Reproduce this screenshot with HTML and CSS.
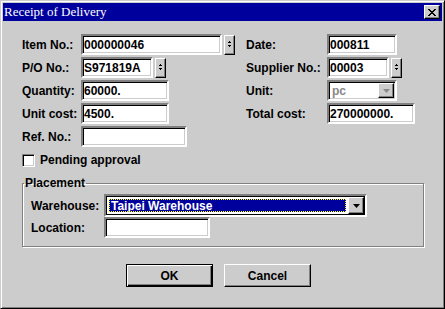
FILE: index.html
```html
<!doctype html>
<html lang="en">

<head>
  <meta charset="UTF-8" />
  <title>Receipt of Delivery</title>
  <link rel="stylesheet" href="styles.css">
</head>

<body>
  <div class="window">
    <div class="titlebar">
      <span class="title">Receipt of Delivery</span>
      <span class="close-btn">
        <svg width="8" height="7" viewBox="0 0 8 7">
          <path d="M0 0h2v1h-2zM6 0h2v1h-2zM1 1h2v1h-2zM5 1h2v1h-2zM2 2h4v1h-4zM3 3h2v1h-2zM2 4h4v1h-4zM1 5h2v1h-2zM5 5h2v1h-2zM0 6h2v1h-2zM6 6h2v1h-2z" fill="#000" />
        </svg>
      </span>
    </div>

    <div class="body">
      <div class="fields">
        <label class="label">Item No.:</label>
        <div class="field">
          <span class="edit w-item">000000046</span>
          <span class="spin"><svg width="9" height="16" viewBox="0 0 9 16"><path d="M4 5h1v1h-1zM3 6h3v1h-3zM3 9h3v1h-3zM4 10h1v1h-1z" fill="#000" /></svg></span>
        </div>
        <label class="label">Date:</label>
        <div class="field"><span class="edit w-date">000811</span></div>

        <label class="label">P/O No.:</label>
        <div class="field">
          <span class="edit w-po">S971819A</span>
          <span class="spin"><svg width="9" height="16" viewBox="0 0 9 16"><path d="M4 5h1v1h-1zM3 6h3v1h-3zM3 9h3v1h-3zM4 10h1v1h-1z" fill="#000" /></svg></span>
        </div>
        <label class="label">Supplier No.:</label>
        <div class="field">
          <span class="edit w-supplier">00003</span>
          <span class="spin"><svg width="9" height="16" viewBox="0 0 9 16"><path d="M4 5h1v1h-1zM3 6h3v1h-3zM3 9h3v1h-3zM4 10h1v1h-1z" fill="#000" /></svg></span>
        </div>

        <label class="label">Quantity:</label>
        <div class="field"><span class="edit w-num">60000.</span></div>
        <label class="label">Unit:</label>
        <div class="field">
          <span class="edit combo disabled w-date">
            <span class="combo-text">pc</span>
            <span class="drop"><svg width="7" height="4" viewBox="0 0 7 4"><path d="M0 0h7l-3.5 4z" fill="#888" /></svg></span>
          </span>
        </div>

        <label class="label">Unit cost:</label>
        <div class="field"><span class="edit w-num">4500.</span></div>
        <label class="label">Total cost:</label>
        <div class="field"><span class="edit w-num">270000000.</span></div>

        <label class="label">Ref. No.:</label>
        <div class="field"><span class="edit w-ref"></span></div>
      </div>

      <div class="check-row">
        <span class="checkbox"></span>
        <span>Pending approval</span>
      </div>

      <fieldset class="group">
        <legend class="group-title">Placement</legend>
        <div class="group-fields">
          <label class="label">Warehouse:</label>
          <div class="field">
            <span class="edit combo focused w-warehouse">
              <span class="combo-text selected">Taipei Warehouse</span>
              <span class="drop"><svg width="7" height="4" viewBox="0 0 7 4"><path d="M0 0h7l-3.5 4z" fill="#000" /></svg></span>
            </span>
          </div>
          <label class="label">Location:</label>
          <div class="field"><span class="edit w-ref"></span></div>
        </div>
      </fieldset>

      <div class="buttons">
        <button class="btn btn-default">OK</button>
        <button class="btn">Cancel</button>
      </div>
    </div>
  </div>
</body>

</html>
```

FILE: styles.css
```css
body {
  margin: 0;
  background-color: #CCCCCC;
  font-family: "Liberation Sans", Arial, sans-serif;
  font-size: 12px;
  font-weight: bold;
  color: #000000;
}

.window {
  box-sizing: border-box;
  width: 445px;
  height: 309px;
  padding: 2px;
  background-color: #CCCCCC;
  border: 1px solid;
  border-color: #CCCCCC #000000 #000000 #CCCCCC;
  box-shadow: inset 1px 1px #FFFFFF, inset -1px -1px #808080;
}

/* title bar */

.titlebar {
  display: flex;
  align-items: center;
  justify-content: space-between;
  height: 18px;
  padding: 0 2px 0 1px;
  background-color: #00009C;
}

.title {
  font-family: "Liberation Serif", "Times New Roman", serif;
  font-weight: normal;
  font-size: 13px;
  color: #FFFFFF;
}

.close-btn {
  box-sizing: border-box;
  display: flex;
  align-items: center;
  justify-content: center;
  width: 16px;
  height: 14px;
  background-color: #CCCCCC;
  border: 1px solid;
  border-color: #FFFFFF #000000 #000000 #FFFFFF;
  box-shadow: inset -1px -1px #808080;
}

/* form body */

.body {
  padding: 13px 18px 0 19px;
}

.fields {
  display: grid;
  grid-template-columns: 59px 165px 81px auto;
  grid-auto-rows: 21px;
  row-gap: 2px;
}

.label {
  display: flex;
  align-items: center;
}

.field {
  display: flex;
  align-items: center;
  gap: 2px;
}

.edit {
  box-sizing: border-box;
  display: flex;
  align-items: center;
  height: 21px;
  padding-left: 1px;
  background-color: #FFFFFF;
  border: 2px solid;
  border-color: #808080 #FFFFFF #FFFFFF #808080;
  box-shadow: inset 1px 1px #000000, inset -1px -1px #CCCCCC;
  white-space: nowrap;
}

.w-item { width: 141px; }
.w-po { width: 72px; }
.w-num { width: 88px; }
.w-ref { width: 106px; }
.w-date { width: 70px; }
.w-supplier { width: 62px; }
.w-warehouse { width: 263px; height: 23px; }

.spin {
  box-sizing: border-box;
  display: flex;
  width: 11px;
  height: 20px;
  background-color: #CCCCCC;
  border: 1px solid;
  border-color: #FFFFFF #000000 #000000 #FFFFFF;
  box-shadow: inset -1px -1px #808080;
}

/* combo boxes */

.combo {
  padding: 0;
  justify-content: space-between;
}

.combo-text {
  flex: 1;
  padding-left: 3px;
}

.combo.disabled .combo-text {
  color: #888888;
}

.combo.focused {
  outline: 1px solid #000000;
  outline-offset: -3px;
}

.combo-text.selected {
  align-self: stretch;
  display: flex;
  align-items: center;
  margin: 3px 2px 3px 3px;
  padding-left: 2px;
  background-color: #00009C;
  color: #FFFFFF;
  outline: 1px dotted #FFFF00;
  outline-offset: -1px;
}

.drop {
  box-sizing: border-box;
  display: flex;
  align-items: center;
  justify-content: center;
  align-self: stretch;
  width: 16px;
  margin: 1px 1px 1px 0;
  background-color: #CCCCCC;
  border: 1px solid;
  border-color: #FFFFFF #000000 #000000 #FFFFFF;
  box-shadow: inset -1px -1px #808080;
}

/* checkbox */

.check-row {
  display: flex;
  align-items: center;
  gap: 5px;
  margin-top: 6px;
}

.checkbox {
  box-sizing: border-box;
  width: 13px;
  height: 13px;
  background-color: #FFFFFF;
  border: 1px solid;
  border-color: #808080 #FFFFFF #FFFFFF #808080;
  box-shadow: inset 1px 1px #000000, inset -1px -1px #CCCCCC;
}

/* group box */

.group {
  box-sizing: border-box;
  width: 402px;
  margin: 9px 0 0 0;
  padding: 4px 8px 8px 8px;
  border: 1px solid #808080;
  box-shadow: inset 1px 1px #FFFFFF, 1px 1px #FFFFFF;
}

.group-title {
  margin-left: -7px;
  padding: 0 1px;
  line-height: 14px;
}

.group-fields {
  display: grid;
  grid-template-columns: 73px auto;
  grid-template-rows: 23px 21px;
}

/* buttons */

.buttons {
  display: flex;
  gap: 11px;
  margin: 17px 0 0 104px;
}

.btn {
  box-sizing: border-box;
  width: 87px;
  height: 23px;
  padding: 0;
  font-family: "Liberation Sans", Arial, sans-serif;
  font-size: 12px;
  font-weight: bold;
  color: #000000;
  background-color: #CCCCCC;
  border: 1px solid;
  border-color: #FFFFFF #000000 #000000 #FFFFFF;
  box-shadow: inset -1px -1px #808080;
}

.btn-default {
  border: 1px solid #000000;
  box-shadow: inset 1px 1px #FFFFFF, inset -1px -1px #000000, inset -2px -2px #808080;
}
```
